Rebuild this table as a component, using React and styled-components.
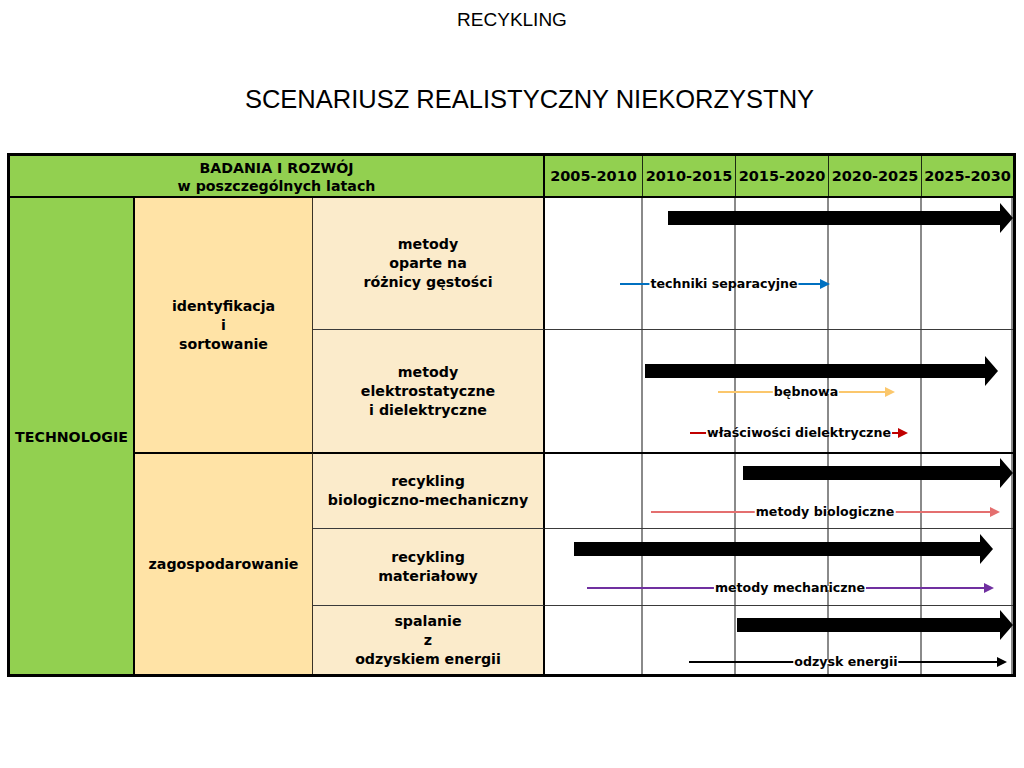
import React from 'react';
import styled, { createGlobalStyle } from 'styled-components';

const GlobalStyle = createGlobalStyle`
  html, body { margin: 0; padding: 0; background: #fff; }
  body { font-family: "DejaVu Sans", Verdana, sans-serif; color: #000; }
`;

const Page = styled.div`
  width: 1024px;
  height: 768px;
  display: flex;
  flex-direction: column;
  align-items: flex-start;
`;

const Kicker = styled.h2`
  align-self: stretch;
  margin: 0;
  height: 40px;
  text-align: center;
  font: 400 19px/40px "Liberation Sans", Arial, sans-serif;
`;

const MainTitle = styled.h1`
  align-self: stretch;
  margin: 39px 0 0;
  padding-left: 35px;
  height: 40px;
  text-align: center;
  font: 400 25.5px/40px "Liberation Sans", Arial, sans-serif;
`;

const Table = styled.div`
  margin: 34px 0 0 7px;
  display: grid;
  grid-template-columns: 125px 178px 232px 468px;
  grid-template-rows: 42px 131px 123px 76px 77px 69px;
  border: 3px solid #000;
  font-weight: 700;
  font-size: 14.2px;
  line-height: 19px;
`;

const Cell = styled.div`
  box-sizing: border-box;
  display: flex;
  align-items: center;
  justify-content: center;
  text-align: center;
`;

const HeadCell = styled(Cell)`
  grid-column: 1 / 4;
  grid-row: 1;
  background: #92d050;
  border-bottom: 2px solid #000;
  border-right: 2px solid #000;
  line-height: 18px;
  padding-top: 1px;
`;

const YearRow = styled.div`
  grid-column: 4;
  grid-row: 1;
  box-sizing: border-box;
  display: grid;
  grid-template-columns: 98px 93px 93px 93px 1fr;
  background: #92d050;
  border-bottom: 2px solid #000;
`;

const Year = styled(Cell)`
  border-right: 1px solid #1c2a12;
  font-size: 14.5px;
  white-space: nowrap;
  &:last-child { border-right: none; }
`;

const TechCell = styled(Cell)`
  grid-column: 1;
  grid-row: 2 / 7;
  background: #92d050;
  border-right: 2px solid #000;
  padding-top: 3px;
`;

const GroupCell = styled(Cell)`
  grid-column: 2;
  grid-row: ${p => p.$rows};
  background: #ffe3a6;
  border-right: 1px solid #3a3226;
  border-top: ${p => (p.$first ? 'none' : '2px solid #000')};
`;

const sepStyle = sep =>
  sep === 'thick' ? '2px solid #000' : sep === 'thin' ? '1px solid #3a3a3a' : 'none';

const MethodCell = styled(Cell)`
  grid-column: 3;
  grid-row: ${p => p.$row};
  background: #fbebcb;
  border-right: 2px solid #000;
  border-top: ${p => sepStyle(p.$sep)};
`;

const Timeline = styled.div`
  grid-column: 4;
  grid-row: ${p => p.$row};
  position: relative;
  box-sizing: border-box;
  display: grid;
  grid-template-columns: 98px 93px 93px 93px 1fr;
  background: #fff;
  border-top: ${p => sepStyle(p.$sep)};
`;

const Slot = styled.div`
  border-right: 2px solid #8a8a8a;
  &:last-of-type { border-right: none; }
`;

const BigArrow = styled.div`
  position: absolute;
  height: 30px;
  display: flex;
  align-items: center;
  transform: translateY(-50%);
`;

const BigShaft = styled.div`
  flex: 1;
  height: 14px;
  background: #000;
`;

const BigHead = styled.div`
  width: 0;
  height: 0;
  border-left: 13px solid #000;
  border-top: 15px solid transparent;
  border-bottom: 15px solid transparent;
`;

const ThinArrow = styled.div`
  position: absolute;
  height: 10px;
  display: flex;
  align-items: center;
  transform: translateY(-50%);
`;

const ThinShaft = styled.div`
  flex: 1;
  height: 2px;
  background: ${p => p.$color};
`;

const ThinHead = styled.div`
  width: 0;
  height: 0;
  border-left: 10px solid ${p => p.$color};
  border-top: 5px solid transparent;
  border-bottom: 5px solid transparent;
`;

const ArrowLabel = styled.span`
  position: absolute;
  transform: translate(-50%, -50%);
  white-space: nowrap;
  font-size: 12.6px;
  line-height: 15px;
  padding: 0 1px;
  background: linear-gradient(transparent 45%, #fff 45%, #fff 72%, transparent 72%);
`;

const rows = [
  {
    lines: ['metody', 'oparte na', 'różnicy gęstości'],
    sep: 'none',
    big: [123, 468, 20],
    thin: [{ color: '#0070c0', from: 75, to: 285, y: 86, label: 'techniki separacyjne', lx: 179 }],
  },
  {
    lines: ['metody', 'elektrostatyczne', 'i dielektryczne'],
    sep: 'thin',
    big: [100, 453, 41],
    thin: [
      { color: '#fbc76c', from: 173, to: 350, y: 62, label: 'bębnowa', lx: 261 },
      { color: '#c00000', from: 145, to: 363, y: 103, label: 'właściwości dielektryczne', lx: 254 },
    ],
  },
  {
    lines: ['recykling', 'biologiczno-mechaniczny'],
    sep: 'thick',
    big: [198, 468, 19],
    thin: [{ color: '#e46f6f', from: 106, to: 455, y: 58, label: 'metody biologiczne', lx: 280 }],
  },
  {
    lines: ['recykling', 'materiałowy'],
    sep: 'thin',
    big: [29, 448, 20],
    thin: [{ color: '#7030a0', from: 42, to: 449, y: 59, label: 'metody mechaniczne', lx: 245 }],
  },
  {
    lines: ['spalanie', 'z', 'odzyskiem energii'],
    sep: 'thin',
    big: [192, 468, 19],
    thin: [{ color: '#000', from: 144, to: 462, y: 56, label: 'odzysk energii', lx: 301 }],
  },
];

const years = ['2005-2010', '2010-2015', '2015-2020', '2020-2025', '2025-2030'];

const Lines = ({ lines }) =>
  lines.map((l, i) => (
    <React.Fragment key={i}>
      {i > 0 && <br />}
      {l}
    </React.Fragment>
  ));

export default function App() {
  return (
    <Page>
      <GlobalStyle />
      <Kicker>RECYKLING</Kicker>
      <MainTitle>SCENARIUSZ REALISTYCZNY NIEKORZYSTNY</MainTitle>
      <Table>
        <HeadCell>
          BADANIA I ROZWÓJ
          <br />
          w poszczególnych latach
        </HeadCell>
        <YearRow>
          {years.map(y => (
            <Year key={y}>{y}</Year>
          ))}
        </YearRow>
        <TechCell>TECHNOLOGIE</TechCell>
        <GroupCell $rows="2 / 4" $first>
          <span>
            identyfikacja
            <br />i<br />
            sortowanie
          </span>
        </GroupCell>
        <GroupCell $rows="4 / 7">zagospodarowanie</GroupCell>
        {rows.map((r, i) => (
          <React.Fragment key={i}>
            <MethodCell $row={i + 2} $sep={r.sep}>
              <span>
                <Lines lines={r.lines} />
              </span>
            </MethodCell>
            <Timeline $row={i + 2} $sep={r.sep}>
              {[0, 1, 2, 3, 4].map(s => (
                <Slot key={s} />
              ))}
              <BigArrow style={{ left: r.big[0], width: r.big[1] - r.big[0], top: r.big[2] }}>
                <BigShaft />
                <BigHead />
              </BigArrow>
              {r.thin.map(t => (
                <React.Fragment key={t.label}>
                  <ThinArrow style={{ left: t.from, width: t.to - t.from, top: t.y }}>
                    <ThinShaft $color={t.color} />
                    <ThinHead $color={t.color} />
                  </ThinArrow>
                  <ArrowLabel style={{ left: t.lx, top: t.y - 1 }}>{t.label}</ArrowLabel>
                </React.Fragment>
              ))}
            </Timeline>
          </React.Fragment>
        ))}
      </Table>
    </Page>
  );
}
